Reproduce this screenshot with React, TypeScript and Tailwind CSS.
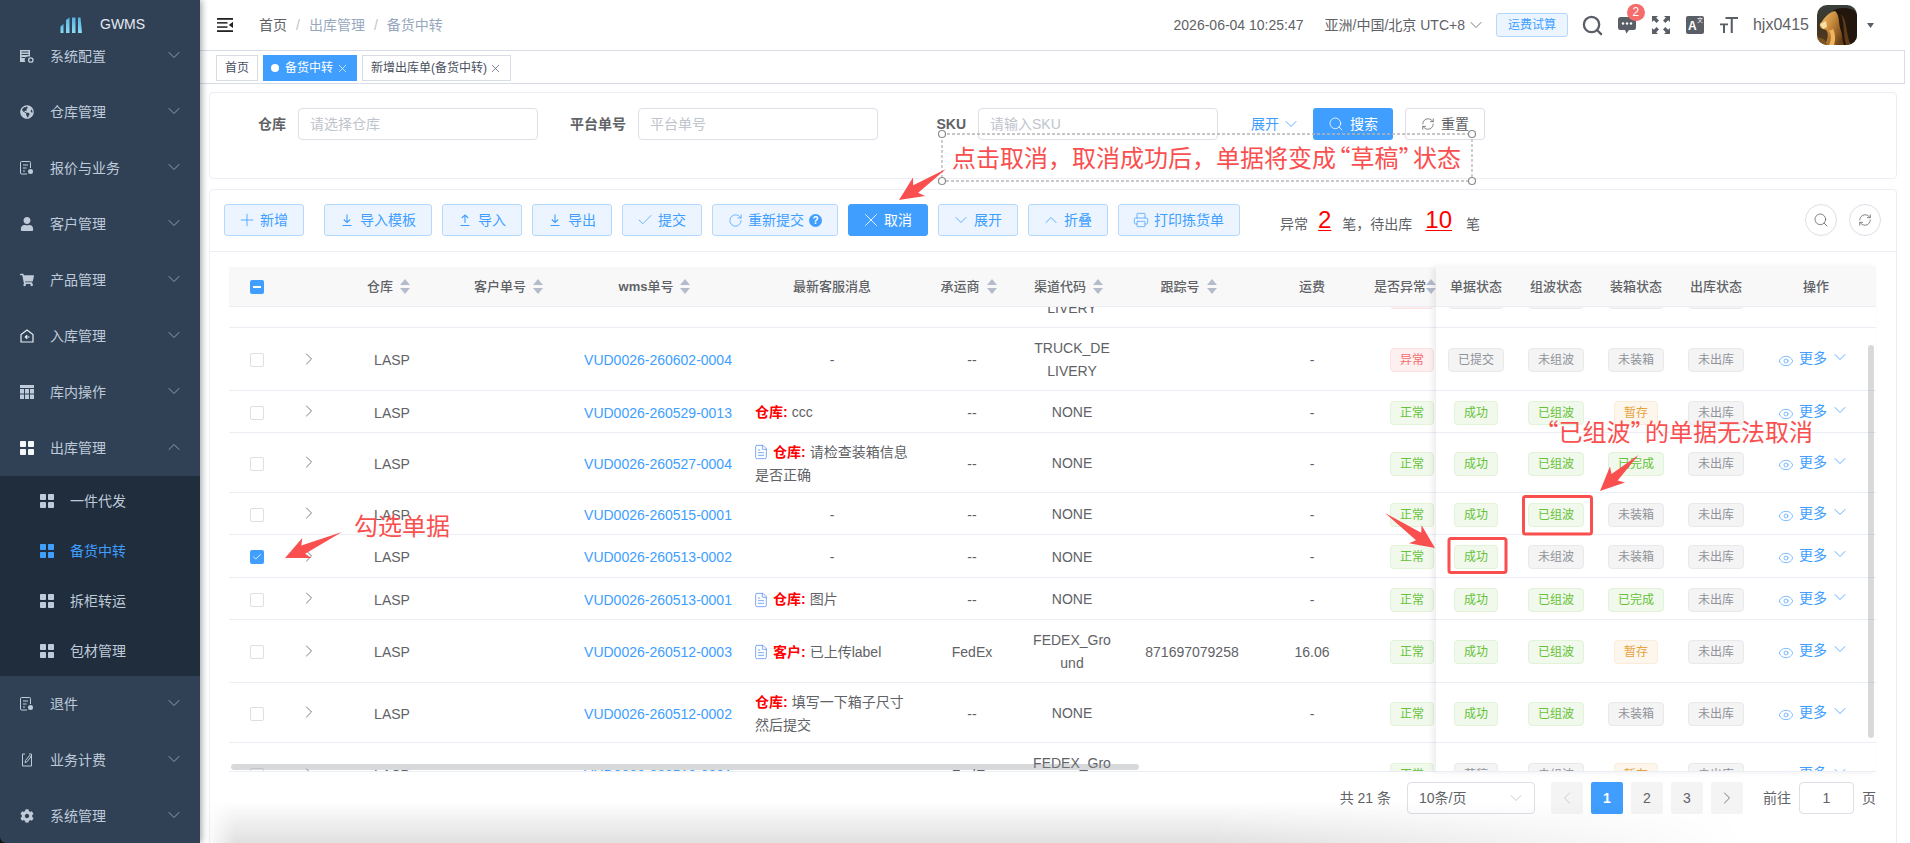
import React from "react";
import {
  Check,
  ChevronDown,
  ChevronLeft,
  ChevronRight,
  ChevronUp,
  Eye,
  FileText,
  Plus,
  Printer,
  RefreshCw,
  RotateCw,
  Search,
  X,
} from "lucide-react";
import { FaCog, FaGlobeAmericas, FaShoppingCart, FaUser } from "react-icons/fa";

const Squares = ({ color }: { color: string }) => (
  <svg width="14" height="14" viewBox="0 0 14 14" fill={color}>
    <rect x="0" y="0" width="6" height="6" rx="0.8" />
    <rect x="8" y="0" width="6" height="6" rx="0.8" />
    <rect x="0" y="8" width="6" height="6" rx="0.8" />
    <rect x="8" y="8" width="6" height="6" rx="0.8" />
  </svg>
);

const ConfigIcon = () => (
  <svg width="14" height="14" viewBox="0 0 14 14" fill="#bfcbd9">
    <path d="M0 0h10v7.500H8A3.200 3.200 0 0 0 5.600 13H0z" />
    <rect x="1.500" y="2.500" width="7" height="1" fill="#304156" />
    <rect x="1.500" y="5" width="7" height="1" fill="#304156" />
    <rect x="1.500" y="8" width="4" height="1" fill="#304156" />
    <circle cx="10.800" cy="11" r="2.200" fill="none" stroke="#bfcbd9" strokeWidth="1.300" />
  </svg>
);

const DocIcon = () => (
  <svg width="14" height="14" viewBox="0 0 14 14" fill="none" stroke="#bfcbd9" strokeWidth="1">
    <path d="M7 13H1.500a1 1 0 0 1-1-1V1.500a1 1 0 0 1 1-1h8a1 1 0 0 1 1 1V7" />
    <path d="M3 4h5M3 7h3.500M3 10h2" />
    <circle cx="10.500" cy="10.500" r="2.500" fill="#bfcbd9" stroke="none" />
  </svg>
);

const HouseIcon = () => (
  <svg width="14" height="14" viewBox="0 0 14 14" fill="none" stroke="#e8edf2" strokeWidth="1.200">
    <path d="M7 1 1 5.500V13h12V5.500z" />
    <path d="M9.500 8H5.500M7.200 6.200 5.300 8l1.900 1.800" />
  </svg>
);

const GridIcon = () => (
  <svg width="14" height="14" viewBox="0 0 14 14" fill="#bfcbd9">
    <rect x="0" y="0" width="14" height="3" />
    <rect x="0" y="4" width="4" height="4.500" />
    <rect x="5" y="4" width="4" height="4.500" />
    <rect x="10" y="4" width="4" height="4.500" />
    <rect x="0" y="9.500" width="4" height="4.500" />
    <rect x="5" y="9.500" width="4" height="4.500" />
    <rect x="10" y="9.500" width="4" height="4.500" />
  </svg>
);

const EditDocIcon = () => (
  <svg width="14" height="14" viewBox="0 0 14 14" fill="none" stroke="#bfcbd9" strokeWidth="1">
    <path d="M9 1h2.500v12h-9V1H5" />
    <path d="M5 9.500 5.500 7.500 9.500 2.500 11 3.700 7 8.800z" />
  </svg>
);

const FullscreenIcon = () => (
  <svg width="18" height="18" viewBox="0 0 18 18" fill="#5a5e66" className="ml-[16px]">
    <path d="M0 0h6L4.200 1.800 7 4.600 4.600 7 1.800 4.200 0 6z" />
    <path d="M18 0h-6l1.800 1.800L11 4.600 13.400 7l2.800-2.800L18 6z" />
    <path d="M0 18h6l-1.800-1.800L7 13.400 4.600 11l-2.800 2.800L0 12z" />
    <path d="M18 18h-6l1.800-1.800L11 13.400l2.400-2.400 2.800 2.800L18 12z" />
  </svg>
);

const menuTop = [
  { name: "系统配置", icon: <ConfigIcon /> },
  { name: "仓库管理", icon: <FaGlobeAmericas size={14} color="#bfcbd9" /> },
  { name: "报价与业务", icon: <DocIcon /> },
  { name: "客户管理", icon: <FaUser size={14} color="#bfcbd9" /> },
  { name: "产品管理", icon: <FaShoppingCart size={14} color="#bfcbd9" /> },
  { name: "入库管理", icon: <HouseIcon /> },
  { name: "库内操作", icon: <GridIcon /> },
];

const menuBottom = [
  { name: "退件", icon: <DocIcon /> },
  { name: "业务计费", icon: <EditDocIcon /> },
  { name: "系统管理", icon: <FaCog size={14} color="#bfcbd9" /> },
];

const subMenu = ["一件代发", "备货中转", "拆柜转运", "包材管理"];

function MenuItem({ name, icon, open }: { name: string; icon: React.ReactNode; open?: boolean }) {
  return (
    <div className="h-[56px] shrink-0 flex items-center pl-5 pr-4 text-sm text-[#bfcbd9]">
      <span className="w-[14px] h-[14px] flex items-center justify-center">{icon}</span>
      <span className="ml-4 flex-1 truncate">{name}</span>
      {open ? (
        <ChevronUp size={20} strokeWidth={1} className="text-[#a3aebb] mb-[2px]" />
      ) : (
        <ChevronDown size={20} strokeWidth={1} className="text-[#a3aebb] mb-[2px]" />
      )}
    </div>
  );
}

function Sidebar() {
  return (
    <aside className="w-[200px] h-[843px] shrink-0 bg-[#304156] rounded-bl-[6px] flex flex-col overflow-hidden relative z-20 shadow-[2px_0_6px_rgba(0,21,41,0.35)]">
      <div className="h-[50px] shrink-0 bg-[#304156] relative z-10 flex items-start pt-[17px] pl-[60px]">
        <svg width="22" height="16" viewBox="0 0 22 16">
          <defs>
            <linearGradient id="logoBars" x1="0" y1="0" x2="0" y2="1">
              <stop offset="0" stopColor="#55b4e0" />
              <stop offset="1" stopColor="#8adcf7" />
            </linearGradient>
          </defs>
          <path d="M0.500 9.500 3.500 7V16H0.500z" fill="url(#logoBars)" />
          <path d="M6 3 9.500 0.500V16H6z" fill="url(#logoBars)" />
          <path d="M12 0.500h3.500V16H12z" fill="url(#logoBars)" />
          <path d="M18 0.500h2.500L22 16h-4z" fill="url(#logoBars)" />
        </svg>
        <span className="ml-[18px] text-sm leading-[14px] text-[#e4e9ee]">GWMS</span>
      </div>
      <div className="-mt-[22px]">
        {menuTop.map((m) => (
          <MenuItem key={m.name} name={m.name} icon={m.icon} />
        ))}
        <MenuItem name="出库管理" icon={<Squares color="#f4f6f8" />} open />
        <div className="bg-[#1f2d3d]">
          {subMenu.map((s) => (
            <div
              key={s}
              className={`h-[50px] flex items-center pl-10 text-sm ${s === "备货中转" ? "text-[#409eff]" : "text-[#bfcbd9]"}`}
            >
              <Squares color={s === "备货中转" ? "#409eff" : "#bfcbd9"} />
              <span className="ml-4">{s}</span>
            </div>
          ))}
        </div>
        {menuBottom.map((m) => (
          <MenuItem key={m.name} name={m.name} icon={m.icon} />
        ))}
      </div>
    </aside>
  );
}

function Avatar() {
  return (
    <svg width="40" height="40" viewBox="0 0 40 40" className="rounded-[10px] ml-2 shrink-0">
      <defs>
        <linearGradient id="avBg" x1="0" y1="0" x2="0" y2="1">
          <stop offset="0" stopColor="#39403c" />
          <stop offset="0.5" stopColor="#3c3424" />
          <stop offset="1" stopColor="#5a3c1a" />
        </linearGradient>
        <linearGradient id="avGold" x1="0" y1="0" x2="1" y2="0.7">
          <stop offset="0" stopColor="#f4c877" />
          <stop offset="0.5" stopColor="#c98a3a" />
          <stop offset="1" stopColor="#6a4018" />
        </linearGradient>
        <filter id="avBlur">
          <feGaussianBlur stdDeviation="0.6" />
        </filter>
      </defs>
      <rect width="40" height="40" fill="url(#avBg)" />
      <g filter="url(#avBlur)">
        <path d="M17 5C24 1 40 3 40 10V40H18C20 30 15 22 16 14 16 10 15 7 17 5Z" fill="#221610" />
        <path d="M3 19C6 16 9 8 18 6 23 10 21 18 24 26 26 32 25 36 27 40H8C11 34 12 28 9 25 6 24 2 23 3 19Z" fill="url(#avGold)" />
        <path d="M3 19 9 16 10 22 6 24Z" fill="#f9dfa6" />
        <path d="M12 26C15 30 14 36 12 40H17C19 34 18 28 16 24Z" fill="#f0b45e" />
        <path d="M24 9C31 16 28 28 34 40H29C26 30 28 20 24 9Z" fill="#5e3a18" />
        <path d="M0 33C5 32 9 35 10 40H0Z" fill="#7a5524" />
      </g>
    </svg>
  );
}

function TopBar() {
  return (
    <header className="h-[51px] shrink-0 mr-[5px] border-b border-[#d8dce5] flex items-center text-sm text-[#606266]">
      <svg width="16" height="14" viewBox="0 0 16 14" className="ml-[17px]" fill="#222">
        <rect x="0" y="0" width="16" height="1.800" />
        <rect x="0" y="4.100" width="10.500" height="1.500" />
        <rect x="0" y="8.300" width="10.500" height="1.500" />
        <rect x="0" y="12.200" width="16" height="1.800" />
        <path d="M16 3.800V10L11.800 6.900z" />
      </svg>
      <nav className="ml-[26px] flex items-center">
        <span className="text-[#606266]">首页</span>
        <span className="mx-[9px] text-[#c0c4cc]">/</span>
        <span className="text-[#97a8be]">出库管理</span>
        <span className="mx-[9px] text-[#c0c4cc]">/</span>
        <span className="text-[#97a8be]">备货中转</span>
      </nav>
      <div className="ml-auto pr-[31px] flex items-center">
        <span>2026-06-04 10:25:47</span>
        <span className="ml-[21px]">亚洲/中国/北京 UTC+8</span>
        <ChevronDown size={20} strokeWidth={1} className="ml-[1px]" />
        <span className="ml-[10px] h-6 w-[72px] rounded-[3px] border border-[#b3d8ff] bg-[#ecf5ff] text-[#409eff] text-xs flex items-center justify-center">
          运费试算
        </span>
        <Search size={23} strokeWidth={2.4} className="ml-[13px] -mr-[1px] text-[#5a5e66]" />
        <span className="ml-[15px] relative">
          <svg width="18" height="18" viewBox="0 0 18 18" fill="#5a5e66" className="block">
            <path d="M2.500 1h13A2.500 2.500 0 0 1 18 3.500v8a2.500 2.500 0 0 1-2.500 2.500H11l-2.500 3.500L7 14H2.500A2.500 2.500 0 0 1 0 11.500v-8A2.500 2.500 0 0 1 2.500 1z" />
            <circle cx="5" cy="7.500" r="1.200" fill="#fff" />
            <circle cx="9" cy="7.500" r="1.200" fill="#fff" />
            <circle cx="13" cy="7.500" r="1.200" fill="#fff" />
          </svg>
          <span className="absolute -top-[12px] -right-[9px] w-[18px] h-[17px] rounded-full bg-[#f56c6c] text-white text-xs leading-[17px] text-center">
            2
          </span>
        </span>
        <FullscreenIcon />
        <span className="ml-[16px] w-[18px] h-[18px] rounded-[2px] bg-[#5a5e66] text-white relative overflow-hidden">
          <span className="absolute left-[2px] top-[3px] text-[12px] leading-[14px] font-bold">A</span>
          <span className="absolute right-[1px] top-[1px] text-[6px] leading-[7px]">文</span>
        </span>
        <svg width="18" height="18" viewBox="0 0 18 18" fill="#5a5e66" className="ml-4">
          <path d="M5.500 1h12.500v2h-5.200v14h-2.100V3H5.500z" />
          <path d="M0 7.500h8v1.700H5V17H3V9.200H0z" />
        </svg>
        <span className="ml-[15px] text-base">hjx0415</span>
        <Avatar />
        <svg width="7" height="5" viewBox="0 0 7 5" fill="#5a5e66" className="ml-[10px]">
          <path d="M0 0h7L3.500 5z" />
        </svg>
      </div>
    </header>
  );
}

function TagsBar() {
  return (
    <div className="h-[33px] shrink-0 mr-[5px] border-b border-r border-[#d8dce5] pt-1 pl-4 flex items-start gap-[5px] text-xs text-[#495060]">
      <span className="h-[26px] px-2 border border-[#d8dce5] flex items-center">首页</span>
      <span className="h-[26px] pl-2 pr-2 bg-[#409eff] text-white flex items-center">
        <span className="w-2 h-2 rounded-full bg-white mr-[6px]" />
        备货中转
        <X size={13} strokeWidth={1.2} className="ml-[3px]" />
      </span>
      <span className="h-[26px] px-2 border border-[#d8dce5] flex items-center">
        新增出库单(备货中转)
        <X size={13} strokeWidth={1.2} className="ml-[2px]" />
      </span>
    </div>
  );
}

function Field({ label, placeholder }: { label: string; placeholder: string }) {
  return (
    <div className="flex items-center">
      <label className="w-[100px] pr-3 text-right text-sm font-bold text-[#606266]">{label}</label>
      <div className="w-[240px] h-8 border border-[#dcdfe6] rounded-[4px] px-[11px] flex items-center text-sm text-[#c0c4cc]">
        {placeholder}
      </div>
    </div>
  );
}

function FilterCard() {
  return (
    <section className="ml-[9px] mt-2 w-[1688px] h-[87px] shrink-0 border border-[#ebeef5] rounded-[4px] pt-[15px]">
      <div className="flex items-center -ml-[12px]">
        <Field label="仓库" placeholder="请选择仓库" />
        <Field label="平台单号" placeholder="平台单号" />
        <Field label="SKU" placeholder="请输入SKU" />
        <span className="ml-[33px] text-sm text-[#409eff] flex items-center gap-[2px]">
          展开
          <ChevronDown size={20} strokeWidth={1} />
        </span>
        <span className="ml-3 w-20 h-8 rounded-[3px] bg-[#409eff] text-white text-sm flex items-center justify-center gap-[6px]">
          <Search size={16} strokeWidth={1.2} />
          搜索
        </span>
        <span className="ml-3 w-20 h-8 rounded-[3px] border border-[#dcdfe6] text-[#606266] text-sm flex items-center justify-center gap-[6px]">
          <RefreshCw size={14} strokeWidth={1.3} />
          重置
        </span>
      </div>
    </section>
  );
}

const ArrowLine = ({ up }: { up?: boolean }) => (
  <svg width="14" height="14" viewBox="0 0 14 14" fill="none" stroke="currentColor" strokeWidth="1.100">
    {up ? <path d="M7 10V2M3.800 5 7 2l3.200 3M2.500 12.500h9" /> : <path d="M7 1.500v8M3.800 6.500 7 9.500l3.200-3M2.500 12.500h9" />}
  </svg>
);

function ToolButton({ icon, text, active, className }: { icon: React.ReactNode; text: React.ReactNode; active?: boolean; className?: string }) {
  return (
    <span
      className={`h-8 px-[15px] rounded-[3px] border text-sm flex items-center gap-[6px] ${
        active ? "bg-[#409eff] border-[#409eff] text-white" : "bg-[#ecf5ff] border-[#b3d8ff] text-[#409eff]"
      } ${className ?? ""}`}
    >
      <span className="w-[14px] h-[14px] flex items-center justify-center">{icon}</span>
      {text}
    </span>
  );
}

function Toolbar() {
  return (
    <div className="h-[62px] border-b border-[#ebeef5] pt-[14px] pl-[14px] flex items-start relative">
      <div className="flex gap-[10px] shrink-0">
        <ToolButton icon={<Plus size={20} strokeWidth={1} className="shrink-0" />} text="新增" className="mr-[10px]" />
        <ToolButton icon={<ArrowLine />} text="导入模板" />
        <ToolButton icon={<ArrowLine up />} text="导入" />
        <ToolButton icon={<ArrowLine />} text="导出" />
        <ToolButton icon={<Check size={18} strokeWidth={1} className="shrink-0" />} text="提交" />
        <ToolButton
          icon={<RotateCw size={15} strokeWidth={1.2} className="shrink-0" />}
          text={
            <span className="flex items-center gap-[5px]">
              重新提交
              <span className="w-[13px] h-[13px] rounded-full bg-[#409eff] text-white text-[10px] font-bold leading-[13px] text-center">?</span>
            </span>
          }
        />
        <ToolButton icon={<X size={22} strokeWidth={0.9} className="shrink-0" />} text="取消" active />
        <ToolButton icon={<ChevronDown size={20} strokeWidth={1} className="shrink-0" />} text="展开" />
        <ToolButton icon={<ChevronUp size={20} strokeWidth={1} className="shrink-0" />} text="折叠" />
        <ToolButton icon={<Printer size={16} strokeWidth={1.1} className="shrink-0" />} text="打印拣货单" />
      </div>
      <div className="ml-10 h-8 flex items-center text-sm text-[#606266]">
        <span className="mt-[8px]">异常</span>
        <span className="ml-[10px] text-[#ff0000] text-[24px] leading-[32px] underline underline-offset-2 decoration-1">2</span>
        <span className="ml-[11px] mt-[8px]">笔，</span>
        <span className="mt-[8px]">待出库</span>
        <span className="ml-[13px] text-[#ff0000] text-[24px] leading-[32px] underline underline-offset-2 decoration-1">10</span>
        <span className="ml-[14px] mt-[8px]">笔</span>
      </div>
      <div className="ml-auto mr-[15px] flex gap-3">
        <span className="w-8 h-8 rounded-full border border-[#dcdfe6] flex items-center justify-center text-[#606266]">
          <Search size={16} strokeWidth={1.2} />
        </span>
        <span className="w-8 h-8 rounded-full border border-[#dcdfe6] flex items-center justify-center text-[#606266]">
          <RefreshCw size={14} strokeWidth={1.3} />
        </span>
      </div>
    </div>
  );
}

type TagTone = "green" | "grey" | "orange" | "red";

const tagTone: Record<string, TagTone> = {
  正常: "green",
  异常: "red",
  成功: "green",
  已提交: "grey",
  草稿: "grey",
  已组波: "green",
  未组波: "grey",
  未装箱: "grey",
  暂存: "orange",
  已完成: "green",
  未出库: "grey",
};

function Tag({ text }: { text: string }) {
  const tone = tagTone[text];
  const cls =
    tone === "green"
      ? "bg-[#f0f9eb] border-[#e1f3d8] text-[#67c23a]"
      : tone === "orange"
        ? "bg-[#fdf6ec] border-[#faecd8] text-[#e6a23c]"
        : tone === "red"
          ? "bg-[#fef0f0] border-[#fde2e2] text-[#f56c6c]"
          : "bg-[#f4f4f5] border-[#e9e9eb] text-[#909399]";
  return <span className={`h-6 px-[9px] rounded-[4px] border text-xs flex items-center ${cls}`}>{text}</span>;
}

type Msg = { icon?: boolean; from: string; line1: string; line2?: string };

type Row = {
  h: string;
  wms: string;
  msg?: Msg;
  carrier: string;
  channel: string[];
  track?: string;
  fee: string;
  abn: string;
  bill: string;
  wave: string;
  box: string;
  out: string;
  checked?: boolean;
};

const rows: Row[] = [
  { h: "h-[63px] -mt-[42px]", wms: "VUD0026-260602-0005", carrier: "--", channel: ["TRUCK_DE", "LIVERY"], fee: "-", abn: "异常", bill: "已提交", wave: "未组波", box: "未装箱", out: "未出库" },
  { h: "h-[63px]", wms: "VUD0026-260602-0004", carrier: "--", channel: ["TRUCK_DE", "LIVERY"], fee: "-", abn: "异常", bill: "已提交", wave: "未组波", box: "未装箱", out: "未出库" },
  { h: "h-[42px]", wms: "VUD0026-260529-0013", msg: { from: "仓库:", line1: "ccc" }, carrier: "--", channel: ["NONE"], fee: "-", abn: "正常", bill: "成功", wave: "已组波", box: "暂存", out: "未出库" },
  { h: "h-[60px]", wms: "VUD0026-260527-0004", msg: { icon: true, from: "仓库:", line1: "请检查装箱信息", line2: "是否正确" }, carrier: "--", channel: ["NONE"], fee: "-", abn: "正常", bill: "成功", wave: "已组波", box: "已完成", out: "未出库" },
  { h: "h-[42px]", wms: "VUD0026-260515-0001", carrier: "--", channel: ["NONE"], fee: "-", abn: "正常", bill: "成功", wave: "已组波", box: "未装箱", out: "未出库" },
  { h: "h-[43px]", wms: "VUD0026-260513-0002", carrier: "--", channel: ["NONE"], fee: "-", abn: "正常", bill: "成功", wave: "未组波", box: "未装箱", out: "未出库", checked: true },
  { h: "h-[42px]", wms: "VUD0026-260513-0001", msg: { icon: true, from: "仓库:", line1: "图片" }, carrier: "--", channel: ["NONE"], fee: "-", abn: "正常", bill: "成功", wave: "已组波", box: "已完成", out: "未出库" },
  { h: "h-[63px]", wms: "VUD0026-260512-0003", msg: { icon: true, from: "客户:", line1: "已上传label" }, carrier: "FedEx", channel: ["FEDEX_Gro", "und"], track: "871697079258", fee: "16.06", abn: "正常", bill: "成功", wave: "已组波", box: "暂存", out: "未出库" },
  { h: "h-[60px]", wms: "VUD0026-260512-0002", msg: { from: "仓库:", line1: "填写一下箱子尺寸", line2: "然后提交" }, carrier: "--", channel: ["NONE"], fee: "-", abn: "正常", bill: "成功", wave: "已组波", box: "未装箱", out: "未出库" },
  { h: "h-[63px]", wms: "VUD0026-260510-0001", carrier: "FedEx", channel: ["FEDEX_Gro", "und"], fee: "-", abn: "正常", bill: "草稿", wave: "未组波", box: "暂存", out: "未出库" },
];

const SortCaret = () => (
  <span className="w-6 flex items-center justify-center">
    <svg width="10" height="15" viewBox="0 0 10 15" fill="#b4bccc">
      <path d="M5 0 10 6H0z" />
      <path d="M0 9h10L5 15z" />
    </svg>
  </span>
);

function HeadCell({ w, children, sort, className }: { w: string; children: React.ReactNode; sort?: boolean; className?: string }) {
  return (
    <div className={`${w} shrink-0 flex items-center justify-center text-[13px] font-medium text-[#606266] ${className ?? ""}`}>
      {children}
      {sort && <SortCaret />}
    </div>
  );
}

function Checkbox({ state }: { state?: "checked" | "half" }) {
  if (state === "half")
    return (
      <span className="w-[14px] h-[14px] rounded-[2px] bg-[#409eff] flex items-center justify-center">
        <span className="w-2 h-[2px] bg-white" />
      </span>
    );
  if (state === "checked")
    return (
      <span className="w-[14px] h-[14px] rounded-[2px] bg-[#409eff] flex items-center justify-center text-white">
        <Check size={10} strokeWidth={2} />
      </span>
    );
  return <span className="w-[14px] h-[14px] rounded-[2px] border border-[#dcdfe6] bg-white" />;
}

function MsgCell({ msg }: { msg?: Msg }) {
  if (!msg) return <div className="w-[160px] shrink-0 text-center">-</div>;
  return (
    <div className="w-[160px] shrink-0 pl-[3px] leading-[23px] text-[#606266]">
      <div className="flex items-center">
        {msg.icon && <FileText size={16} strokeWidth={1.1} className="text-[#4d88f0] -ml-[2px] mr-[4px] shrink-0" />}
        <b className="text-[#ff0000]">{msg.from}</b>
        <span className="ml-1">{msg.line1}</span>
      </div>
      {msg.line2 && <div>{msg.line2}</div>}
    </div>
  );
}

function LeftPanel() {
  return (
    <div className="w-[1207px] shrink-0">
      <div className="h-[40px] bg-[#f8f8f9] border-b border-[#ebeef5] flex">
        <div className="w-[56px] shrink-0 flex items-center justify-center">
          <Checkbox state="half" />
        </div>
        <div className="w-[47px] shrink-0" />
        <HeadCell w="w-[120px]" sort>仓库</HeadCell>
        <HeadCell w="w-[112px]" sort className="pl-[8px]">客户单号</HeadCell>
        <HeadCell w="w-[188px]" sort>
          <b>wms</b>单号
        </HeadCell>
        <HeadCell w="w-[160px]">最新客服消息</HeadCell>
        <HeadCell w="w-[120px]" sort>承运商</HeadCell>
        <HeadCell w="w-[80px]" sort>渠道代码</HeadCell>
        <HeadCell w="w-[160px]" sort>跟踪号</HeadCell>
        <HeadCell w="w-[80px]">运费</HeadCell>
        <div className="w-[84px] shrink-0 flex items-center text-[13px] font-medium text-[#606266] pl-[22px] overflow-hidden whitespace-nowrap">
          是否异常
          <SortCaret />
        </div>
      </div>
      <div className="h-[465px] overflow-hidden border-b border-[#ebeef5]">
        {rows.map((r) => (
          <div key={r.wms} className={`${r.h} border-b border-[#ebeef5] flex items-center text-sm text-[#606266] pt-[2px]`}>
            <div className="w-[56px] shrink-0 flex justify-center">
              <Checkbox state={r.checked ? "checked" : undefined} />
            </div>
            <div className="w-[47px] shrink-0 flex justify-center text-[#606266] -mt-[3px]">
              <ChevronRight size={20} strokeWidth={1} />
            </div>
            <div className="w-[120px] shrink-0 text-center">LASP</div>
            <div className="w-[112px] shrink-0" />
            <div className="w-[188px] shrink-0 text-center text-[#409eff]">{r.wms}</div>
            <MsgCell msg={r.msg} />
            <div className="w-[120px] shrink-0 text-center">{r.carrier}</div>
            <div className="w-[80px] shrink-0 text-center leading-[23px]">
              {r.channel.map((c) => (
                <div key={c} className="whitespace-nowrap">{c}</div>
              ))}
            </div>
            <div className="w-[160px] shrink-0 text-center">{r.track}</div>
            <div className="w-[80px] shrink-0 text-center">{r.fee}</div>
            <div className="w-[84px] shrink-0 flex justify-end pr-[2px]">
              <Tag text={r.abn} />
            </div>
          </div>
        ))}
      </div>
    </div>
  );
}

function RightPanel() {
  return (
    <div className="w-[440px] shrink-0 relative z-10 bg-white shadow-[-3px_0_6px_rgba(0,0,0,0.08)]">
      <div className="h-[40px] bg-[#f8f8f9] border-b border-[#ebeef5] flex">
        <HeadCell w="w-[80px]">单据状态</HeadCell>
        <HeadCell w="w-[80px]">组波状态</HeadCell>
        <HeadCell w="w-[80px]">装箱状态</HeadCell>
        <HeadCell w="w-[80px]">出库状态</HeadCell>
        <HeadCell w="w-[120px]">操作</HeadCell>
      </div>
      <div className="h-[465px] overflow-hidden border-b border-[#ebeef5]">
        {rows.map((r) => (
          <div key={r.wms} className={`${r.h} border-b border-[#ebeef5] flex items-center pt-[2px]`}>
            <div className="w-[80px] shrink-0 flex justify-center"><Tag text={r.bill} /></div>
            <div className="w-[80px] shrink-0 flex justify-center"><Tag text={r.wave} /></div>
            <div className="w-[80px] shrink-0 flex justify-center"><Tag text={r.box} /></div>
            <div className="w-[80px] shrink-0 flex justify-center"><Tag text={r.out} /></div>
            <div className="w-[120px] shrink-0 flex items-center justify-center pr-1 text-sm text-[#409eff]">
              <Eye size={16} strokeWidth={1} className="mt-[2px]" />
              <span className="ml-[5px] mb-[4px]">更多</span>
              <ChevronDown size={20} strokeWidth={1} className="ml-[3px] mb-[6px]" />
            </div>
          </div>
        ))}
      </div>
    </div>
  );
}

function Pagination() {
  return (
    <div className="mt-[10px] pr-[20px] flex items-center justify-end text-sm text-[#606266]">
      <span>共 21 条</span>
      <span className="ml-4 w-[128px] h-8 border border-[#dcdfe6] rounded-[4px] pl-[11px] pr-2 flex items-center justify-between">
        10条/页
        <ChevronDown size={20} strokeWidth={1} className="text-[#c0c4cc]" />
      </span>
      <span className="ml-4 w-8 h-8 rounded-[2px] bg-[#f4f4f5] text-[#c0c4cc] flex items-center justify-center">
        <ChevronLeft size={20} strokeWidth={1} />
      </span>
      {["1", "2", "3"].map((p) => (
        <span
          key={p}
          className={`ml-2 w-8 h-8 rounded-[2px] text-sm flex items-center justify-center ${p === "1" ? "bg-[#409eff] text-white font-bold" : "bg-[#f4f4f5] text-[#606266]"}`}
        >
          {p}
        </span>
      ))}
      <span className="ml-2 w-8 h-8 rounded-[2px] bg-[#f4f4f5] text-[#606266] flex items-center justify-center">
        <ChevronRight size={20} strokeWidth={1} />
      </span>
      <span className="ml-5">前往</span>
      <span className="ml-2 w-[55px] h-8 border border-[#dcdfe6] rounded-[4px] flex items-center justify-center">1</span>
      <span className="ml-2">页</span>
    </div>
  );
}

function arrowPoints(x1: number, y1: number, x2: number, y2: number) {
  const len = Math.hypot(x2 - x1, y2 - y1);
  const ux = (x2 - x1) / len;
  const uy = (y2 - y1) / len;
  const nx = -uy;
  const ny = ux;
  const at = (back: number, side: number) =>
    `${(x2 - ux * back + nx * side).toFixed(1)},${(y2 - uy * back + ny * side).toFixed(1)}`;
  return [`${x1},${y1}`, at(20, 4.5), at(24, 11), `${x2},${y2}`, at(24, -11), at(20, -4.5)].join(" ");
}

const Quote = ({ open }: { open?: boolean }) => (
  <span className={`inline-flex w-[14.5px] font-['Noto_Sans_CJK_SC'] ${open ? "justify-end" : "justify-start"}`}>
    {open ? "“" : "”"}
  </span>
);

function Annotations() {
  const red = "#fa4f4f";
  const corners = [
    [942, 134],
    [1472, 134],
    [942, 181],
    [1472, 181],
  ];
  return (
    <div className="absolute inset-0 z-30 pointer-events-none text-[#fa4f4f] text-[24px] leading-[32px] whitespace-nowrap">
      <svg width="1910" height="843" className="absolute inset-0">
        <rect x="942" y="134" width="530" height="47" fill="none" stroke="#b5b5b5" strokeWidth="1.300" strokeDasharray="3 2" />
        {corners.map(([x, y]) => (
          <circle key={`${x}-${y}`} cx={x} cy={y} r="3.500" fill="#fff" stroke="#8d8d8d" strokeWidth="1.200" />
        ))}
        <polygon points={arrowPoints(946, 169, 899, 200)} fill={red} />
        <polygon points={arrowPoints(342, 532, 285, 558)} fill={red} />
        <polygon points={arrowPoints(1638.5, 455, 1600, 491)} fill={red} />
        <polygon points={arrowPoints(1385, 513, 1435, 548)} fill={red} />
        <rect x="1523.500" y="496.500" width="68" height="37.500" rx="2" fill="none" stroke={red} strokeWidth="3" />
        <rect x="1449" y="538.500" width="57" height="34" rx="2" fill="none" stroke={red} strokeWidth="3" />
      </svg>
      <span className="absolute left-[952px] top-[141px]">
        点击取消，取消成功后，单据将变成<Quote open />草稿<Quote />状态
      </span>
      <span className="absolute left-[354px] top-[511px]">勾选单据</span>
      <span className="absolute left-[1544px] top-[415px]">
        <Quote open />已组波<Quote />的单据无法取消
      </span>
    </div>
  );
}

export default function App() {
  return (
    <div className="relative w-[1910px] h-[843px] overflow-hidden flex bg-[#111] font-['Liberation_Sans','Noto_Sans_CJK_SC',sans-serif]">
      <Sidebar />
      <main className="flex-1 min-w-0 bg-white flex flex-col">
        <TopBar />
        <TagsBar />
        <FilterCard />
        <section className="ml-[9px] mt-[10px] w-[1688px] flex-1 border border-b-0 border-[#ebeef5] rounded-t-[4px]">
          <Toolbar />
          <div className="mt-[15px] ml-[19px] w-[1647px] flex relative">
            <LeftPanel />
            <RightPanel />
            <div className="absolute z-20 left-[2px] top-[497px] w-[908px] h-[6px] rounded-full bg-[#909399]/35" />
            <div className="absolute z-20 left-[1639px] top-[78px] w-[6px] h-[393px] rounded-full bg-[#909399]/35" />
          </div>
          <Pagination />
        </section>
      </main>
      <div className="absolute z-20 bottom-0 left-[205px] w-[1540px] h-[42px] bg-gradient-to-b from-transparent to-black/12 [mask-image:linear-gradient(to_right,transparent,black_2%,black_65%,transparent)] pointer-events-none" />
      <Annotations />
    </div>
  );
}
